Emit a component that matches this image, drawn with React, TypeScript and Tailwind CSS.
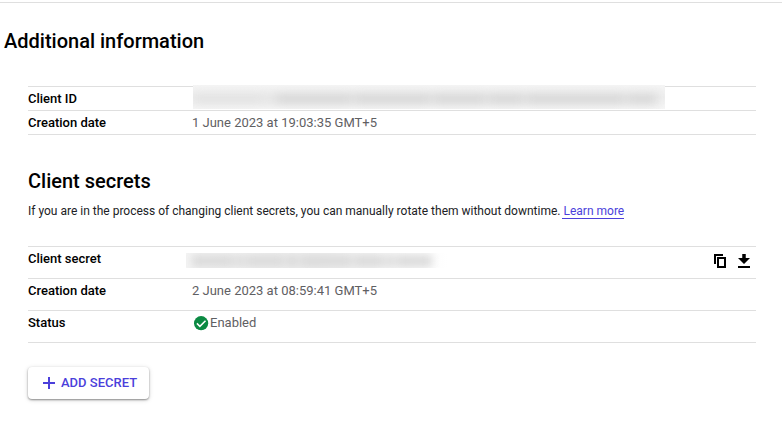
import type { ReactNode } from "react";

function Row({ label, tall, children }: { label: string; tall?: boolean; children: ReactNode }) {
  return (
    <div className={`flex border-b border-[#dfdfdf] text-[13px] leading-[23px] ${tall ? "h-8" : "h-6"}`}>
      <dt className="w-[164px] shrink-0 font-medium text-black">{label}</dt>
      <dd className="flex h-6 min-w-0 grow text-[#5f6063]">{children}</dd>
    </div>
  );
}

const idSmudges = [72, 8, 76, 78, 54, 36, 100, 30];
const secretSmudges = [42, 8, 38, 12, 52, 30, 8, 36];

function HiddenId() {
  return (
    <div className="relative z-10 -mt-0.5 ml-px flex h-6 w-[472px] items-center overflow-hidden bg-gradient-to-b from-[#f5f5f5] via-[#eeeeee] to-[#f6f6f6] pt-1">
      <div className="flex h-2.5 w-full gap-0.5 pr-2 blur-[5px]">
        {idSmudges.map((w, i) => (
          <span key={i} className={`h-full ${i < 2 ? "bg-[#e2e2e2]" : "bg-[#d6d6d6]"}`} style={{ width: w }} />
        ))}
      </div>
    </div>
  );
}

function HiddenSecret() {
  return (
    <div className="-ml-1.5 mt-1.5 flex h-[15px] w-[262px] items-center overflow-hidden bg-gradient-to-r from-[#f4f4f4] via-[#eeeeee] to-white">
      <div className="flex h-3 w-full gap-0.5 pl-1.5 blur-[4px]">
        {secretSmudges.map((w, i) => (
          <span key={i} className="h-full bg-[#dadada]" style={{ width: w }} />
        ))}
      </div>
    </div>
  );
}

export default function App() {
  return (
    <main className="h-[430px] w-full overflow-hidden bg-white pt-0.5 font-['Roboto','Liberation_Sans',sans-serif] text-black">
      <div className="border-t border-[#dfdfdf] pt-[26px]">
        <h2 className="pl-1 text-[20px] leading-6 font-medium">Additional information</h2>
      </div>
      <div className="pr-[26px] pl-7">
        <dl className="mt-[33px] border-t border-[#dfdfdf]">
          <Row label="Client ID"><HiddenId /></Row>
          <Row label="Creation date">1 June 2023 at 19:03:35 GMT+5</Row>
        </dl>
        <h2 className="mt-[34px] text-[20px] leading-6 font-medium">Client secrets</h2>
        <p className="mt-2.5 text-[12px] leading-4 whitespace-nowrap text-[#202124]">
          If you are in the process of changing client secrets, you can manually rotate them without downtime.{" "}
          <a className="-ml-px border-b border-[#4b3fdb] pl-px text-[#4b3fdb]">Learn more</a>
        </p>
        <dl className="mt-[27px] border-t border-[#dfdfdf]">
          <Row label="Client secret" tall>
            <HiddenSecret />
            <div className="mt-[7px] mr-1.5 ml-auto flex gap-3">
              <svg width="12" height="14" viewBox="0 0 12 14" aria-label="Copy">
                <path d="M0 0h9v2H2v8H0zM3 3h9v11H3zM5 5v7h5V5z" fill="#000" fillRule="evenodd" />
              </svg>
              <svg width="12" height="14" viewBox="0 0 12 14" aria-label="Download">
                <path d="M4.25 0h3.5v4H12L6 10 0 4h4.25zM0 12h12v2H0z" fill="#000" />
              </svg>
            </div>
          </Row>
          <Row label="Creation date" tall>2 June 2023 at 08:59:41 GMT+5</Row>
          <Row label="Status" tall>
            <svg className="mt-[5px] mr-px ml-0.5" width="15" height="15" viewBox="0 0 15 15" aria-hidden="true">
              <circle cx="7.1" cy="7.2" r="7.1" fill="#0b8a43" />
              <path d="m2.9 7.4 3 3 5.6-5.7" fill="none" stroke="#fff" strokeWidth="1.5" />
            </svg>
            Enabled
          </Row>
        </dl>
        <button className="mt-6 flex h-8 w-[121px] items-center rounded bg-white pl-[15px] text-[13px] font-medium text-[#4b3fdb] shadow-[0_1px_2px_rgba(0,0,0,0.4),0_1px_5px_rgba(0,0,0,0.15)]">
          <svg className="mr-1.5" width="12" height="12" viewBox="0 0 12 12" aria-hidden="true">
            <path d="M5 0h2v5h5v2H7v5H5V7H0V5h5z" fill="#4b3fdb" />
          </svg>
          ADD SECRET
        </button>
      </div>
    </main>
  );
}
